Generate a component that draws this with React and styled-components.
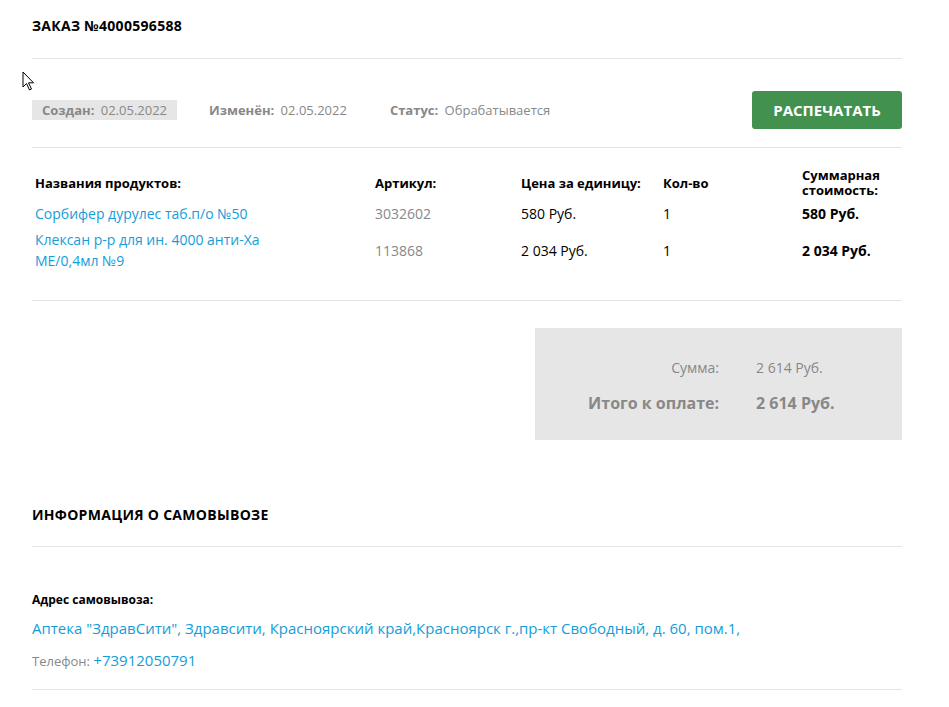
import React from 'react'
import styled, { createGlobalStyle } from 'styled-components'

const GlobalStyle = createGlobalStyle`
  html, body {
    margin: 0;
    padding: 0;
    background: #fff;
    font-family: "Open Sans", "Liberation Sans", sans-serif;
    color: #000;
  }
`

const products = [
  { name: 'Сорбифер дурулес таб.п/о №50', sku: '3032602', price: '580 Руб.', qty: '1', total: '580 Руб.' },
  { name: 'Клексан р-р для ин. 4000 анти-Ха МЕ/0,4мл №9', sku: '113868', price: '2 034 Руб.', qty: '1', total: '2 034 Руб.' },
]

function Cursor() {
  return (
    <CursorWrap>
      <svg width="14" height="20" viewBox="0 0 14 20">
        <path d="M1 1 L1 16 L4.5 12.5 L7.5 19 L9.5 18 L6.5 11.8 L11.5 11.8 Z" fill="#fff" stroke="#000" strokeWidth="1" strokeLinejoin="round" />
      </svg>
    </CursorWrap>
  )
}

export default function App() {
  return (
    <>
      <GlobalStyle />
      <Page>
        <Cursor />
        <Title>Заказ №4000596588</Title>
        <Divider />

        <MetaRow>
          <MetaList>
            <MetaItem $badge>
              <b>Создан:</b> 02.05.2022
            </MetaItem>
            <MetaItem $offset={32}>
              <b>Изменён:</b> 02.05.2022
            </MetaItem>
            <MetaItem $offset={43}>
              <b>Статус:</b> Обрабатывается
            </MetaItem>
          </MetaList>
          <PrintButton>Распечатать</PrintButton>
        </MetaRow>
        <Divider />

        <Table>
          <HeadCell>Названия продуктов:</HeadCell>
          <HeadCell>Артикул:</HeadCell>
          <HeadCell>Цена за единицу:</HeadCell>
          <HeadCell>Кол-во</HeadCell>
          <HeadCell>Суммарная<br />стоимость:</HeadCell>
          {products.map((p) => (
            <React.Fragment key={p.sku}>
              <Cell $link>{p.name}</Cell>
              <Cell $muted>{p.sku}</Cell>
              <Cell>{p.price}</Cell>
              <Cell>{p.qty}</Cell>
              <Cell $bold>{p.total}</Cell>
            </React.Fragment>
          ))}
        </Table>
        <Divider />

        <TotalsRow>
          <Totals>
            <TotalLabel>Сумма:</TotalLabel>
            <TotalValue>2 614 Руб.</TotalValue>
            <TotalLabel $big>Итого к оплате:</TotalLabel>
            <TotalValue $big>2 614 Руб.</TotalValue>
          </Totals>
        </TotalsRow>

        <SectionTitle>Информация о самовывозе</SectionTitle>
        <Divider />

        <Pickup>
          <PickupLabel>Адрес самовывоза:</PickupLabel>
          <Address>Аптека "ЗдравСити", Здравсити, Красноярский край,Красноярск г.,пр-кт Свободный, д. 60, пом.1,</Address>
          <Phone>Телефон: <a>+73912050791</a></Phone>
        </Pickup>
        <Divider />
      </Page>
    </>
  )
}

const Page = styled.div`
  position: relative;
  width: 870px;
  padding: 16px 32px 0 32px;
`

const CursorWrap = styled.div`
  position: absolute;
  left: 22px;
  top: 71px;
  line-height: 0;
`

const Title = styled.h1`
  margin: 0;
  font-size: 14px;
  font-weight: 700;
  letter-spacing: 0.3px;
  text-transform: uppercase;
  line-height: 20px;
  padding-bottom: 22px;
`

const Divider = styled.div`
  height: 1px;
  background: #e4e4e4;
`

const MetaRow = styled.div`
  display: flex;
  align-items: center;
  justify-content: space-between;
  padding: 32px 0 18px;
`

const MetaList = styled.div`
  display: flex;
  align-items: center;
`

const MetaItem = styled.div`
  font-size: 13px;
  color: #888;
  line-height: 20px;
  margin-left: ${(p) => p.$offset || 0}px;
  padding: 0 ${(p) => (p.$badge ? '10px' : '0')};
  background: ${(p) => (p.$badge ? '#e6e6e6' : 'transparent')};
  b {
    font-weight: 700;
    margin-right: 3px;
  }
`

const PrintButton = styled.button`
  width: 150px;
  height: 38px;
  border: none;
  border-radius: 3px;
  background: #43914f;
  color: #fff;
  font-family: inherit;
  font-size: 15px;
  font-weight: 700;
  text-transform: uppercase;
  cursor: pointer;
`

const Table = styled.div`
  display: grid;
  grid-template-columns: 340px 146px 142px 139px 100px;
  align-items: center;
  row-gap: 5px;
  padding: 20px 0 29px 3px;
`

const HeadCell = styled.div`
  font-size: 13px;
  font-weight: 700;
  line-height: 15px;
`

const Cell = styled.div`
  font-size: 14px;
  line-height: 21px;
  font-weight: ${(p) => (p.$bold ? 700 : 400)};
  color: ${(p) => (p.$link ? '#149dd9' : p.$muted ? '#888' : '#000')};
  padding-right: ${(p) => (p.$link ? '100px' : '0')};
`

const TotalsRow = styled.div`
  display: flex;
  justify-content: flex-end;
  padding: 27px 0 65px;
`

const Totals = styled.div`
  width: 367px;
  height: 112px;
  box-sizing: border-box;
  background: #e6e6e6;
  display: grid;
  grid-template-columns: 184px auto;
  column-gap: 37px;
  row-gap: 15px;
  align-content: center;
  align-items: center;
  padding-top: 4px;
`

const TotalLabel = styled.div`
  text-align: right;
  color: #888;
  font-size: ${(p) => (p.$big ? '16px' : '14px')};
  font-weight: ${(p) => (p.$big ? 700 : 400)};
`

const TotalValue = styled.div`
  color: #888;
  font-size: ${(p) => (p.$big ? '16px' : '14px')};
  font-weight: ${(p) => (p.$big ? 700 : 400)};
`

const SectionTitle = styled.h2`
  margin: 0;
  font-size: 14px;
  font-weight: 700;
  text-transform: uppercase;
  letter-spacing: 0.3px;
  line-height: 20px;
  padding-bottom: 21px;
`

const Pickup = styled.div`
  padding: 44px 0 18px;
`

const PickupLabel = styled.div`
  font-size: 12px;
  font-weight: 700;
  line-height: 18px;
  margin-bottom: 9px;
`

const Address = styled.div`
  font-size: 15px;
  color: #149dd9;
  line-height: 20px;
  margin-bottom: 12px;
`

const Phone = styled.div`
  font-size: 13px;
  color: #888;
  line-height: 20px;
  a {
    color: #149dd9;
    font-size: 15px;
  }
`
